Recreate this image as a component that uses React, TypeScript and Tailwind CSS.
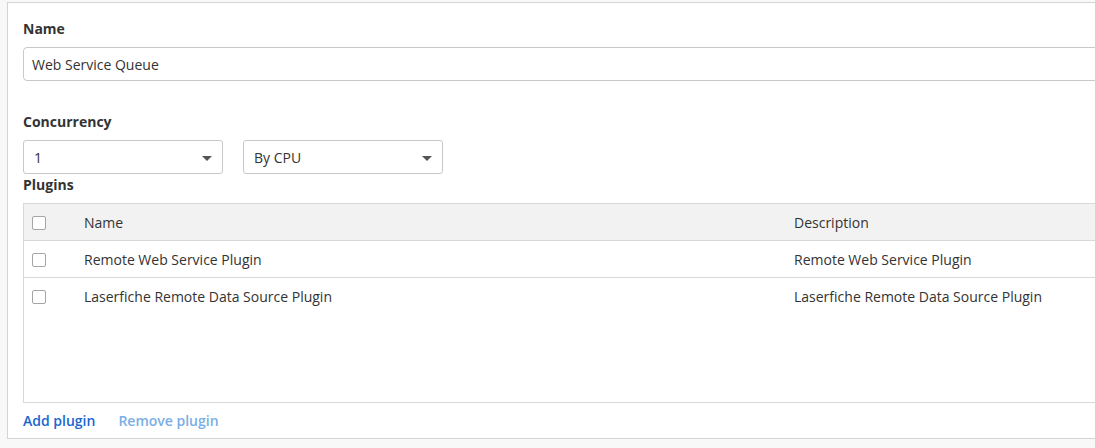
const plugins = [
  { name: "Remote Web Service Plugin", description: "Remote Web Service Plugin" },
  {
    name: "Laserfiche Remote Data Source Plugin",
    description: "Laserfiche Remote Data Source Plugin",
  },
];

function Caret() {
  return (
    <svg width="10" height="5" viewBox="0 0 10 5" className="shrink-0">
      <path d="M0 0h10L5 5z" fill="#555" />
    </svg>
  );
}

function Select({ value }: { value: string }) {
  return (
    <div className="flex h-[34px] w-[200px] items-center justify-between rounded-[3px] border border-[#c8c8c8] bg-white pt-[2px] pl-[10px] pr-[10px] text-[14px] text-[#333]">
      <span>{value}</span>
      <Caret />
    </div>
  );
}

function Checkbox() {
  return (
    <div className="h-[14px] w-[14px] rounded-[2px] border border-[#a6a6a6] bg-white" />
  );
}

export default function App() {
  return (
    <div
      className="h-[448px] w-[1095px] overflow-hidden bg-[#f8f8f8] pt-[2px] pl-[7px]"
      style={{ fontFamily: '"Open Sans", "Liberation Sans", sans-serif' }}
    >
      <div className="h-[437px] w-[1200px] border border-[#d4d4d4] bg-white px-[15px] pt-[16px] text-[14px] leading-[20px] text-[#333]">
        <div className="font-bold">Name</div>
        <div className="mt-[8px] flex h-[34px] w-[1150px] items-center rounded-[4px] border border-[#c8c8c8] px-[8px] pt-[2px]">
          Web Service Queue
        </div>

        <div className="mt-[31px] font-bold">Concurrency</div>
        <div className="mt-[8px] flex gap-[20px]">
          <Select value="1" />
          <Select value="By CPU" />
        </div>

        <div className="pt-[1px] font-bold">Plugins</div>
        <div className="mt-[8px] h-[200px] w-[1150px] border border-[#d8d8d8]">
          <div className="grid h-[37px] grid-cols-[60px_710px_1fr] items-center border-b border-[#d8d8d8] bg-[#f2f2f2] pt-[2px]">
            <div className="pl-[8px]">
              <Checkbox />
            </div>
            <div>Name</div>
            <div>Description</div>
          </div>
          {plugins.map((p, i) => (
            <div
              key={p.name}
              className={
                i < plugins.length - 1
                  ? "grid h-[37px] grid-cols-[60px_710px_1fr] items-center border-b border-[#d8d8d8] pt-[1px]"
                  : "grid h-[37px] grid-cols-[60px_710px_1fr] items-center pt-[1px]"
              }
            >
              <div className="pl-[8px]">
                <Checkbox />
              </div>
              <div>{p.name}</div>
              <div>{p.description}</div>
            </div>
          ))}
        </div>

        <div className="mt-[8px] flex gap-[23px] text-[14px]">
          <span className="font-semibold text-[#1a66d0]">Add plugin</span>
          <span className="font-semibold text-[#7aaee6]">Remove plugin</span>
        </div>
      </div>
    </div>
  );
}
